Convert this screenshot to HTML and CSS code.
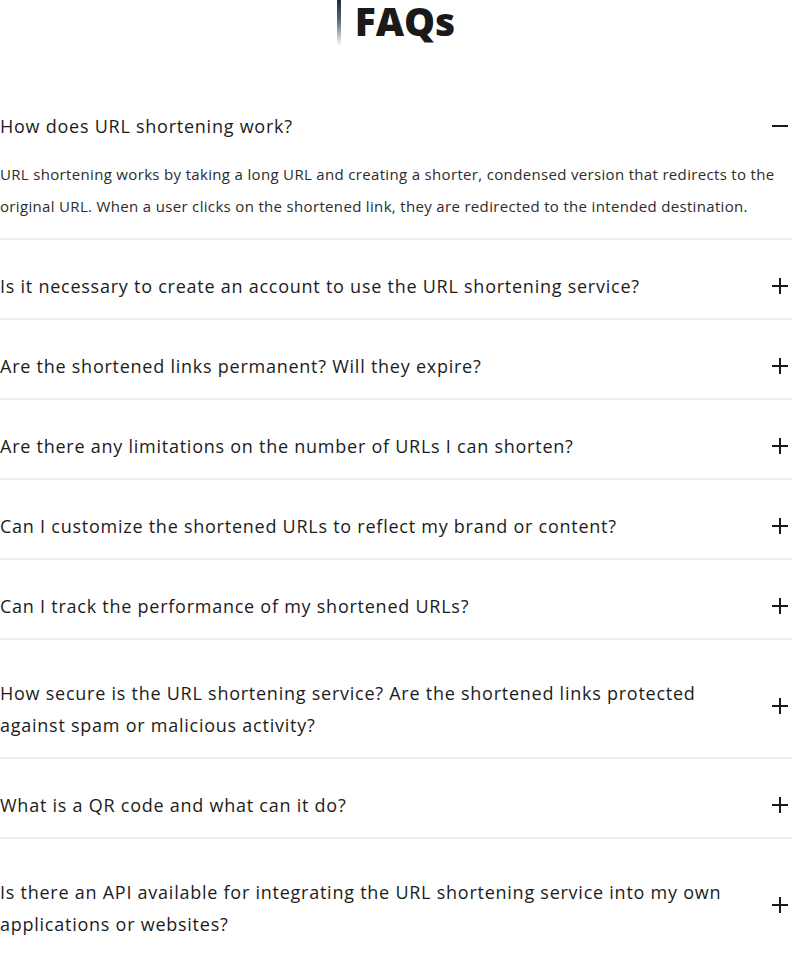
FILE: index.html
```html
<!DOCTYPE html>
<html lang="en">
<head>
<meta charset="utf-8">
<title>FAQs</title>
<link rel="stylesheet" href="styles.css">
</head>
<body>
<section class="faq">
  <header class="faq-head">
    <span class="faq-bar"></span>
    <h2 class="faq-title">FAQs</h2>
  </header>
  <div class="faq-list">
    <div class="faq-item open">
      <div class="faq-q">
        <span class="faq-text">How does URL shortening work?</span>
        <span class="faq-icon minus"></span>
      </div>
      <p class="faq-a">URL shortening works by taking a long URL and creating a shorter, condensed version that redirects to the original URL. When a user clicks on the shortened link, they are redirected to the intended destination.</p>
    </div>
    <div class="faq-item">
      <div class="faq-q"><span class="faq-text">Is it necessary to create an account to use the URL shortening service?</span><span class="faq-icon plus"></span></div>
    </div>
    <div class="faq-item">
      <div class="faq-q"><span class="faq-text">Are the shortened links permanent? Will they expire?</span><span class="faq-icon plus"></span></div>
    </div>
    <div class="faq-item">
      <div class="faq-q"><span class="faq-text">Are there any limitations on the number of URLs I can shorten?</span><span class="faq-icon plus"></span></div>
    </div>
    <div class="faq-item">
      <div class="faq-q"><span class="faq-text">Can I customize the shortened URLs to reflect my brand or content?</span><span class="faq-icon plus"></span></div>
    </div>
    <div class="faq-item">
      <div class="faq-q"><span class="faq-text">Can I track the performance of my shortened URLs?</span><span class="faq-icon plus"></span></div>
    </div>
    <div class="faq-item">
      <div class="faq-q multi"><span class="faq-text">How secure is the URL shortening service? Are the shortened links protected against spam or malicious activity?</span><span class="faq-icon plus"></span></div>
    </div>
    <div class="faq-item">
      <div class="faq-q"><span class="faq-text">What is a QR code and what can it do?</span><span class="faq-icon plus"></span></div>
    </div>
    <div class="faq-item">
      <div class="faq-q multi"><span class="faq-text">Is there an API available for integrating the URL shortening service into my own applications or websites?</span><span class="faq-icon plus"></span></div>
    </div>
  </div>
</section>
</body>
</html>
```
FILE: styles.css
```css
* { box-sizing: border-box; }
html, body { margin: 0; padding: 0; background: #fff; }
body {
  font-family: "Open Sans", "Lato", sans-serif;
  color: #1c1c1c;
}
.faq { width: 792px; }
.faq-head {
  display: flex;
  justify-content: center;
  align-items: flex-start;
  gap: 14px;
  height: 46px;
}
.faq-bar {
  align-self: stretch;
  width: 4px;
  background: linear-gradient(to bottom, #1b2a40 0%, #5a6a80 45%, #ffffff 100%);
}
.faq-title {
  margin: 0;
  font-size: 39px;
  line-height: 42px;
  font-weight: 800;
  color: #1a1a1a;
}
.faq-list { margin-top: 34px; }
.faq-item { border-bottom: 2px solid #ececec; }
.faq-q {
  display: flex;
  align-items: center;
  justify-content: space-between;
  gap: 30px;
  padding: 30px 4px 16px 0;
}
.faq-q.multi { padding-top: 37px; }
.faq-q.multi .faq-icon { margin-bottom: 6px; }
.faq-text {
  font-size: 18px;
  line-height: 32px;
  letter-spacing: 0.75px;
  max-width: 740px;
}
.faq-icon {
  position: relative;
  flex: none;
  width: 16px;
  height: 16px;
}
.faq-icon::before,
.faq-icon::after {
  content: "";
  position: absolute;
  background: #1a1a1a;
}
.faq-icon::before { left: 0; right: 0; top: 7px; height: 2px; }
.faq-icon.plus::after { top: 0; bottom: 0; left: 7px; width: 2px; }
.faq-a {
  margin: 0;
  padding: 0 0 16px;
  font-size: 15px;
  line-height: 32px;
  letter-spacing: 0.33px;
  color: #2c2c2c;
}
```
